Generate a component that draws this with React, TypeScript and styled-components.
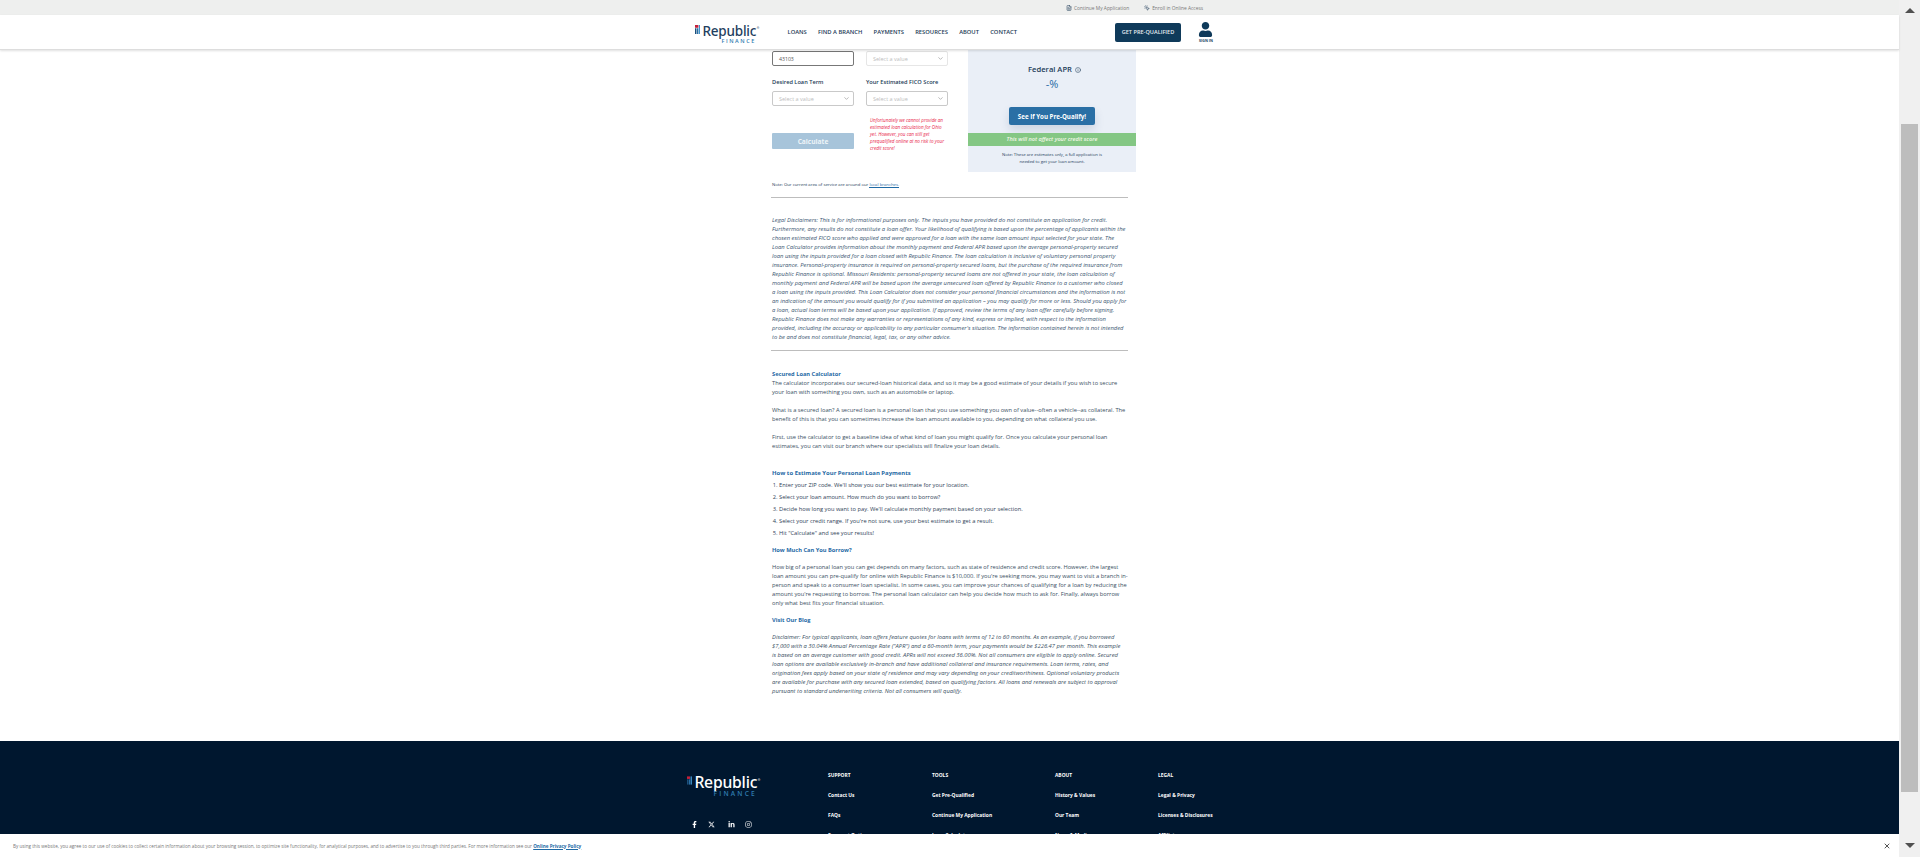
import React from "react";
import styled, { createGlobalStyle } from "styled-components";
import { FaFacebookF, FaLinkedinIn, FaInstagram, FaUser } from "react-icons/fa";
import { FaXTwitter } from "react-icons/fa6";
import { ChevronDown, FileText, Info, MousePointerClick, X } from "lucide-react";

const ink = "#1c3b57";
const blue = "#1f6aa5";
const font = `"Open Sans", "Liberation Sans", sans-serif`;

const GlobalStyle = createGlobalStyle`
  html, body {
    margin: 0;
    height: 100%;
    overflow: hidden;
    background: #fff;
    font-family: ${font};
    color: ${ink};
  }
  * {
    box-sizing: border-box;
  }
`;

const Shell = styled.div`
  display: flex;
  width: 1920px;
  height: 857px;
  overflow: hidden;
`;

const Page = styled.div`
  flex: 1;
  min-width: 0;
  display: flex;
  flex-direction: column;
`;

const TopBar = styled.div`
  height: 15px;
  flex: none;
  background: #eeefee;
  display: flex;
  align-items: center;
  padding-left: 1066px;
  gap: 15px;
  font-size: 4.85px;
  color: #777;
`;

const TopLink = styled.span`
  display: flex;
  align-items: center;
  gap: 2px;

  svg {
    color: ${ink};
  }
`;

const NavBar = styled.header`
  height: 35px;
  flex: none;
  display: flex;
  align-items: center;
  padding-left: 695px;
  border-bottom: 1px solid #ddd;
  box-shadow: 0 1px 2px rgba(0, 0, 0, 0.12);
  position: relative;
  z-index: 2;
  background: #fff;
`;

const Logo = styled.div<{ $dark?: boolean; $big?: boolean }>`
  display: flex;
  align-items: flex-start;
  gap: ${(p) => (p.$big ? 2.5 : 2)}px;
  width: ${(p) => (p.$big ? 73 : 64)}px;
  margin-top: ${(p) => (p.$big ? 0 : 3)}px;
  flex: none;
  color: ${(p) => (p.$dark ? "#fff" : "#1f3f60")};
`;

const LogoWords = styled.div<{ $big?: boolean }>`
  display: flex;
  flex-direction: column;
  align-items: flex-end;
  padding-top: ${(p) => (p.$big ? 4 : 3)}px;
`;

const LogoName = styled.span<{ $big?: boolean }>`
  font-family: "Noto Sans", sans-serif;
  font-size: ${(p) => (p.$big ? 15.7 : 13.5)}px;
  font-weight: 500;
  letter-spacing: -0.2px;
  line-height: ${(p) => (p.$big ? 15 : 13)}px;
`;

const LogoMarkR = styled.sup`
  font-size: 3px;
  line-height: 0;
  vertical-align: 7px;
  margin-left: 0.5px;
`;

const LogoSub = styled.span<{ $big?: boolean }>`
  margin-right: 3px;
  font-size: ${(p) => (p.$big ? 6.6 : 5.5)}px;
  letter-spacing: ${(p) => (p.$big ? 2.2 : 1.6)}px;
  line-height: ${(p) => (p.$big ? 8 : 7)}px;
  font-weight: 600;
  color: #2f7bb0;
`;

const NavLinks = styled.nav`
  display: flex;
  gap: 11.2px;
  margin-left: 28.5px;
  font-size: 5.8px;
  font-weight: 600;
`;

const Prequal = styled.button`
  margin-left: 98px;
  width: 66px;
  height: 19px;
  border: 0;
  border-radius: 2px;
  background: #0f3a5a;
  color: #e6edf2;
  font-family: ${font};
  font-size: 5.6px;
  font-weight: 600;
  padding: 0;
`;

const SignIn = styled.div`
  margin-left: 17px;
  width: 16px;
  display: flex;
  flex-direction: column;
  align-items: center;
  font-size: 3.6px;
  font-weight: 700;
  color: #0f3a5a;
  gap: 1px;
`;

const Content = styled.main`
  flex: 1;
  min-height: 0;
  overflow: hidden;
  padding-left: 772px;
  position: relative;
`;

const Calc = styled.div`
  display: flex;
`;

const FormGrid = styled.div`
  width: 196px;
  flex: none;
  padding-top: 1px;
  display: grid;
  grid-template-columns: 82px 82px;
  column-gap: 12px;
  align-content: start;
`;

const Field = styled.div<{ $focus?: boolean; $faint?: boolean }>`
  height: 15px;
  padding: 0 3.5px 0 6px;
  display: flex;
  align-items: center;
  justify-content: space-between;
  border-radius: 2px;
  font-size: ${(p) => (p.$focus ? 5.2 : 5.5)}px;
  color: ${(p) => (p.$focus ? "#555" : "#bdbdbd")};
  border: 1px solid ${(p) => (p.$focus ? "#777" : p.$faint ? "#e6e6e6" : "#c9c9c9")};

  svg {
    color: #888;
  }
`;

const Label = styled.label`
  font-size: 5.65px;
  font-weight: 600;
  line-height: 9px;
  margin: 12px 0 4px;
`;

const Calculate = styled.button`
  margin-top: 27px;
  height: 16px;
  border: 0;
  border-radius: 1px;
  background: #a7c4da;
  color: #eef4f8;
  font-family: ${font};
  font-size: 6.6px;
  font-weight: 700;
  padding: 0;
`;

const Warning = styled.p`
  margin: 11px 0 0;
  padding-left: 4px;
  font-size: 4.6px;
  line-height: 7px;
  font-style: italic;
  color: #e8264a;
`;

const ResultPanel = styled.aside`
  width: 168px;
  height: 122px;
  flex: none;
  background: #eaeff7;
  text-align: center;
`;

const AprTitle = styled.div`
  margin-top: 14px;
  font-size: 7.6px;
  font-weight: 600;
  line-height: 11px;
  display: flex;
  justify-content: center;
  align-items: center;
  gap: 3px;
  padding-left: 5px;
`;

const AprValue = styled.div`
  margin-top: 1px;
  font-size: 11px;
  line-height: 16px;
  color: ${blue};
`;

const QualifyBtn = styled.button`
  display: block;
  margin: 15px auto 0;
  width: 86px;
  height: 18px;
  border: 0;
  border-radius: 2px;
  background: #2a6fa5;
  color: #fff;
  font-family: ${font};
  font-size: 6.2px;
  font-weight: 700;
  padding: 0;
  box-shadow: 0 5px 10px rgba(40, 70, 110, 0.15);
`;

const GreenBand = styled.div`
  margin-top: 8px;
  height: 13px;
  background: #84c784;
  color: #f3f8e8;
  font-size: 5.6px;
  font-weight: 600;
  font-style: italic;
  line-height: 13px;
`;

const PanelNote = styled.p`
  margin: 5px 0 0;
  font-size: 4.25px;
  line-height: 7.4px;
`;

const SmallNote = styled.p`
  margin: 8px 0 0;
  font-size: 4.25px;
  line-height: 8px;
`;

const LocalLink = styled.a`
  color: ${blue};
  border-bottom: 1px solid ${blue};
`;

const Rule = styled.hr<{ $gap: number }>`
  width: 357px;
  margin: ${(p) => p.$gap}px 0 0 -1px;
  border: 0;
  border-top: 1px solid #bdbdbd;
`;

const Article = styled.div`
  width: 356px;
  font-size: 5.72px;
  line-height: 9px;
`;

const Legal = styled(Article)`
  width: 354.5px;
  margin-top: 18px;
  font-size: 5.84px;
  font-style: italic;
  color: #3a5570;
`;

const Heading = styled.h4<{ $top: number; $size?: number }>`
  margin: ${(p) => p.$top}px 0 0;
  font-size: ${(p) => p.$size ?? 5.7}px;
  line-height: 9px;
  font-weight: 700;
  color: ${blue};
`;

const Para = styled.p<{ $top?: number }>`
  margin: ${(p) => p.$top ?? 0}px 0 0;
  color: #3a4f63;
`;

const Steps = styled.ol`
  margin: 0.5px 0 0;
  padding-left: 7px;
  color: #2f4358;
`;

const Step = styled.li`
  line-height: 12px;
`;

const Disclaimer = styled(Para)`
  width: 351.5px;
  font-size: 5.85px;
  font-style: italic;
`;

const Footer = styled.footer`
  height: 93px;
  flex: none;
  background: #00172f;
  overflow: hidden;
  display: flex;
  padding: 30px 0 0 687px;
  color: #fff;
`;

const FooterBrand = styled.div`
  width: 141px;
  flex: none;
`;

const Socials = styled.div`
  display: flex;
  align-items: center;
  gap: 10px;
  margin: 23px 0 0 3.5px;
  font-size: 7px;

  svg:nth-child(3) {
    margin-left: 3px;
  }
`;

const FooterCol = styled.div<{ $w: number }>`
  width: ${(p) => p.$w}px;
  flex: none;
  display: flex;
  flex-direction: column;
  gap: 12px;
  font-size: 4.9px;
  line-height: 8px;
  font-weight: 700;
`;

const Cookie = styled.div`
  height: 23px;
  flex: none;
  display: flex;
  align-items: center;
  justify-content: space-between;
  padding: 0 8px 0 13px;
  font-size: 4.62px;
  color: #777;
  background: #fff;
`;

const CookieLink = styled.a`
  color: ${blue};
  font-weight: 700;
  text-decoration: underline;
`;

const Scrollbar = styled.div`
  width: 21px;
  flex: none;
  background: #f0f0f0;
  display: flex;
  flex-direction: column;
  align-items: center;
  padding: 8px 0 9px;
`;

const Thumb = styled.div`
  width: 17px;
  height: 668px;
  margin-top: 111px;
  background: #bdbdbd;
`;

const ArrowUp = styled.div`
  width: 0;
  height: 0;
  border-left: 5px solid transparent;
  border-right: 5px solid transparent;
  border-bottom: 5px solid #505050;
`;

const ArrowDown = styled.div`
  width: 0;
  height: 0;
  margin-top: auto;
  border-left: 5px solid transparent;
  border-right: 5px solid transparent;
  border-top: 5px solid #505050;
`;

const LogoMark: React.FC<{ h: number }> = ({ h }) => (
  <svg width={(h * 9) / 15} height={h} viewBox="0 0 9 15">
    <rect x="0" y="0" width="5.7" height="4.6" fill="#c4203a" />
    <rect x="0" y="5.4" width="2.4" height="9.6" fill="#1a4f7c" />
    <rect x="3.2" y="5.4" width="2.5" height="9.6" fill="#2a6fa5" />
    <rect x="6.5" y="0" width="2.5" height="15" fill="#3f93cb" />
  </svg>
);

const footerCols: { w: number; items: string[] }[] = [
  { w: 104, items: ["SUPPORT", "Contact Us", "FAQs", "Payment Options"] },
  { w: 123, items: ["TOOLS", "Get Pre-Qualified", "Continue My Application", "Loan Calculator"] },
  { w: 103, items: ["ABOUT", "History & Values", "Our Team", "News & Media"] },
  { w: 120, items: ["LEGAL", "Legal & Privacy", "Licenses & Disclosures", "Affiliates"] },
];

const App: React.FC = () => {
  return (
    <Shell>
      <GlobalStyle />
      <Page>
        <TopBar>
          <TopLink>
            <FileText size={6} /> Continue My Application
          </TopLink>
          <TopLink>
            <MousePointerClick size={6} /> Enroll in Online Access
          </TopLink>
        </TopBar>
        <NavBar>
          <Logo>
            <LogoMark h={15} />
            <LogoWords>
              <LogoName>
                Republic<LogoMarkR>®</LogoMarkR>
              </LogoName>
              <LogoSub>FINANCE</LogoSub>
            </LogoWords>
          </Logo>
          <NavLinks>
            <span>LOANS</span>
            <span>FIND A BRANCH</span>
            <span>PAYMENTS</span>
            <span>RESOURCES</span>
            <span>ABOUT</span>
            <span>CONTACT</span>
          </NavLinks>
          <Prequal>GET PRE-QUALIFIED</Prequal>
          <SignIn>
            <FaUser size={15} />
            <span>SIGN IN</span>
          </SignIn>
        </NavBar>
        <Content>
          <Calc>
            <FormGrid>
              <Field $focus>43103</Field>
              <Field $faint>
                Select a value <ChevronDown size={7} />
              </Field>
              <Label>Desired Loan Term</Label>
              <Label>Your Estimated FICO Score</Label>
              <Field>
                Select a value <ChevronDown size={7} />
              </Field>
              <Field>
                Select a value <ChevronDown size={7} />
              </Field>
              <Calculate>Calculate</Calculate>
              <Warning>
                Unfortunately we cannot provide an estimated loan calculation for Ohio yet. However, you can still get
                prequalified online at no risk to your credit score!
              </Warning>
            </FormGrid>
            <ResultPanel>
              <AprTitle>
                Federal APR <Info size={6} />
              </AprTitle>
              <AprValue>-%</AprValue>
              <QualifyBtn>See If You Pre-Qualify!</QualifyBtn>
              <GreenBand>This will not affect your credit score</GreenBand>
              <PanelNote>
                Note: These are estimates only, a full application is
                <br />
                needed to get your loan amount.
              </PanelNote>
            </ResultPanel>
          </Calc>
          <SmallNote>
            Note: Our current area of service are around our <LocalLink>local branches.</LocalLink>
          </SmallNote>
          <Rule $gap={9} />
          <Legal>
            Legal Disclaimers: This is for informational purposes only. The inputs you have provided do not constitute
            an application for credit. Furthermore, any results do not constitute a loan offer. Your likelihood of
            qualifying is based upon the percentage of applicants within the chosen estimated FICO score who applied and
            were approved for a loan with the same loan amount input selected for your state. The Loan Calculator
            provides information about the monthly payment and Federal APR based upon the average personal-property
            secured loan using the inputs provided for a loan closed with Republic Finance. The loan calculation is
            inclusive of voluntary personal property insurance. Personal-property insurance is required on
            personal-property secured loans, but the purchase of the required insurance from Republic Finance is
            optional. Missouri Residents: personal-property secured loans are not offered in your state, the loan
            calculation of monthly payment and Federal APR will be based upon the average unsecured loan offered by
            Republic Finance to a customer who closed a loan using the inputs provided. This Loan Calculator does not
            consider your personal financial circumstances and the information is not an indication of the amount you
            would qualify for if you submitted an application – you may qualify for more or less. Should you apply for
            a loan, actual loan terms will be based upon your application. If approved, review the terms of any loan
            offer carefully before signing. Republic Finance does not make any warranties or representations of any
            kind, express or implied, with respect to the information provided, including the accuracy or applicability
            to any particular consumer's situation. The information contained herein is not intended to be and does not
            constitute financial, legal, tax, or any other advice.
          </Legal>
          <Rule $gap={8} />
          <Article>
            <Heading $top={19}>Secured Loan Calculator</Heading>
            <Para>
              The calculator incorporates our secured-loan historical data, and so it may be a good estimate of your
              details if you wish to secure your loan with something you own, such as an automobile or laptop.
            </Para>
            <Para $top={9}>
              What is a secured loan? A secured loan is a personal loan that you use something you own of value--often a
              vehicle--as collateral. The benefit of this is that you can sometimes increase the loan amount available
              to you, depending on what collateral you use.
            </Para>
            <Para $top={9}>
              First, use the calculator to get a baseline idea of what kind of loan you might qualify for. Once you
              calculate your personal loan estimates, you can visit our branch where our specialists will finalize your
              loan details.
            </Para>
            <Heading $top={18} $size={5.95}>
              How to Estimate Your Personal Loan Payments
            </Heading>
            <Steps>
              <Step>Enter your ZIP code. We'll show you our best estimate for your location.</Step>
              <Step>Select your loan amount. How much do you want to borrow?</Step>
              <Step>Decide how long you want to pay. We'll calculate monthly payment based on your selection.</Step>
              <Step>Select your credit range. If you're not sure, use your best estimate to get a result.</Step>
              <Step>Hit "Calculate" and see your results!</Step>
            </Steps>
            <Heading $top={7.5}>How Much Can You Borrow?</Heading>
            <Para $top={8}>
              How big of a personal loan you can get depends on many factors, such as state of residence and credit
              score. However, the largest loan amount you can pre-qualify for online with Republic Finance is $10,000. If
              you're seeking more, you may want to visit a branch in-person and speak to a consumer loan specialist. In
              some cases, you can improve your chances of qualifying for a loan by reducing the amount you're requesting
              to borrow. The personal loan calculator can help you decide how much to ask for. Finally, always borrow
              only what best fits your financial situation.
            </Para>
            <Heading $top={8}>Visit Our Blog</Heading>
            <Disclaimer $top={8}>
              Disclaimer: For typical applicants, loan offers feature quotes for loans with terms of 12 to 60 months. As
              an example, if you borrowed $7,000 with a 30.04% Annual Percentage Rate ("APR") and a 60-month term, your
              payments would be $226.47 per month. This example is based on an average customer with good credit. APRs
              will not exceed 36.00%. Not all consumers are eligible to apply online. Secured loan options are available
              exclusively in-branch and have additional collateral and insurance requirements. Loan terms, rates, and
              origination fees apply based on your state of residence and may vary depending on your creditworthiness.
              Optional voluntary products are available for purchase with any secured loan extended, based on qualifying
              factors. All loans and renewals are subject to approval pursuant to standard underwriting criteria. Not all
              consumers will qualify.
            </Disclaimer>
          </Article>
        </Content>
        <Footer>
          <FooterBrand>
            <Logo $dark $big>
              <LogoMark h={19} />
              <LogoWords $big>
                <LogoName $big>
                  Republic<LogoMarkR>®</LogoMarkR>
                </LogoName>
                <LogoSub $big>FINANCE</LogoSub>
              </LogoWords>
            </Logo>
            <Socials>
              <FaFacebookF />
              <FaXTwitter />
              <FaLinkedinIn />
              <FaInstagram />
            </Socials>
          </FooterBrand>
          {footerCols.map((col) => (
            <FooterCol key={col.items[0]} $w={col.w}>
              {col.items.map((item) => (
                <span key={item}>{item}</span>
              ))}
            </FooterCol>
          ))}
        </Footer>
        <Cookie>
          <span>
            By using this website, you agree to our use of cookies to collect certain information about your browsing
            session, to optimize site functionality, for analytical purposes, and to advertise to you through third
            parties. For more information see our <CookieLink>Online Privacy Policy</CookieLink>
          </span>
          <X size={8} strokeWidth={3} color="#555" />
        </Cookie>
      </Page>
      <Scrollbar>
        <ArrowUp />
        <Thumb />
        <ArrowDown />
      </Scrollbar>
    </Shell>
  );
};

export default App;
